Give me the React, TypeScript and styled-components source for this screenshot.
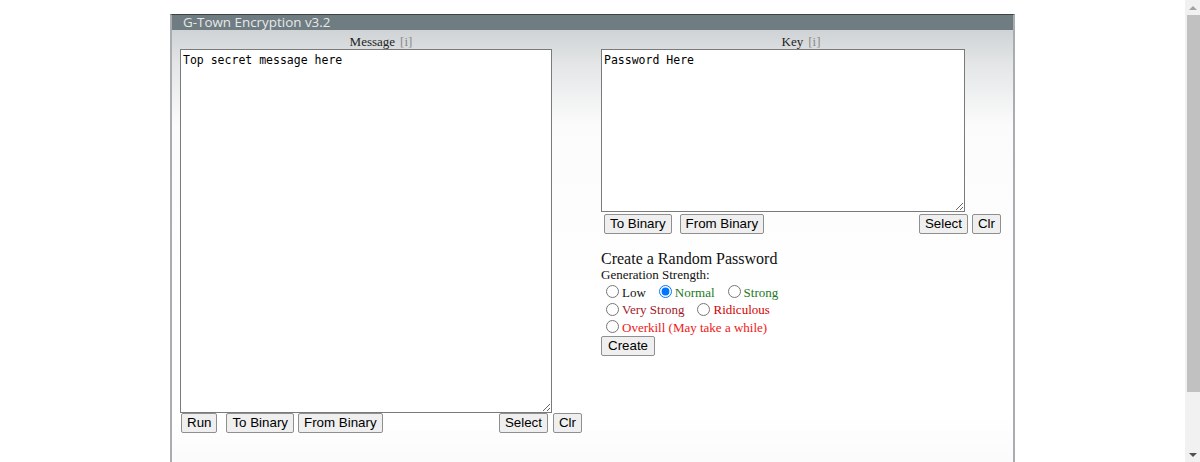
import { useState } from "react";
import styled, { createGlobalStyle } from "styled-components";

const GlobalStyle = createGlobalStyle`
  html, body {
    margin: 0;
    padding: 0;
    background: #fff;
    font-family: "Liberation Serif", "Times New Roman", serif;
  }
  body {
    padding: 14px 15px 0 0;
  }
`;

// fake classic scrollbar (page is taller than the window)
const ScrollTrack = styled.div`
  position: fixed;
  top: 0;
  right: 0;
  width: 15px;
  height: 100vh;
  background: #f1f1f1;
  display: flex;
  flex-direction: column;
  align-items: center;
`;

const ScrollArrow = styled.div<{ $down?: boolean }>`
  height: 15px;
  width: 15px;
  display: flex;
  align-items: center;
  justify-content: center;

  &::after {
    content: "";
    border-left: 4px solid transparent;
    border-right: 4px solid transparent;
    ${({ $down }) =>
      $down ? "border-top: 4px solid #505050;" : "border-bottom: 4px solid #a3a3a3;"}
  }
`;

const ScrollThumb = styled.div`
  width: 13px;
  margin-left: 1px;
  height: 377px;
  background: #c1c1c1;
`;

const ScrollGap = styled.div`
  flex: 1;
`;

const Frame = styled.div`
  width: 845px;
  margin: 0 auto;
  border-top: 1px solid #3c4347;
  border-left: 2px solid #a9adaf;
  border-right: 2px solid #a9adaf;
  background: linear-gradient(#c6cbcd 0px, #e4e6e7 50px, #fbfbfb 110px, #ffffff 300px, #ffffff 400px, #f4f4f4 520px);
  min-height: 514px;
  box-sizing: border-box;
`;

const TitleBar = styled.div`
  background: #6f7c81;
  color: #e6e9ea;
  font-family: "Open Sans", "DejaVu Sans", sans-serif;
  font-size: 13.4px;
  line-height: 15px;
  height: 15px;
  padding-left: 11px;
`;

const Columns = styled.div`
  display: grid;
  grid-template-columns: 402px 400px;
  column-gap: 19px;
  padding: 4px 0 0 8px;
`;

const Cell = styled.div`
  display: flex;
  flex-direction: column;
`;

const Label = styled.div`
  text-align: center;
  font-size: 13px;
  line-height: 15px;
  color: #222;
`;

const Info = styled.span`
  color: #8a8a8a;
  margin-left: 5px;
`;

const TextBox = styled.textarea<{ $w: number; $h: number }>`
  width: ${({ $w }) => $w}px;
  height: ${({ $h }) => $h}px;
  box-sizing: border-box;
  border: 1px solid #7a7a7a;
  background: #fff;
  font-family: "DejaVu Sans Mono", "Liberation Mono", monospace;
  font-size: 11.5px;
  line-height: 14px;
  padding: 3px 2px;
  margin: 0;
  color: #000;
  resize: both;
  outline: none;
`;

const ButtonRow = styled.div<{ $pad: number; $top?: number }>`
  display: flex;
  justify-content: space-between;
  align-items: center;
  padding-left: ${({ $pad }) => $pad}px;
  margin-top: ${({ $top }) => $top ?? 0}px;
`;

const Group = styled.div<{ $gap: number }>`
  display: flex;
  gap: ${({ $gap }) => $gap}px;
`;

const Btn = styled.button<{ $mr?: number }>`
  font-family: "Liberation Sans", Arial, sans-serif;
  font-size: 13.33px;
  height: 20px;
  line-height: 16px;
  padding: 0 5px;
  background: #efefef;
  border: 1px solid #8f8f8f;
  border-radius: 2px;
  color: #000;
  margin: 0;
  margin-right: ${({ $mr }) => $mr ?? 0}px;
  cursor: pointer;
`;

const Generator = styled.div`
  margin-top: 16px;
  display: flex;
  flex-direction: column;
  align-items: flex-start;
`;

const GenTitle = styled.div`
  font-size: 16px;
  line-height: 18px;
  color: #111;
`;

const GenSub = styled.div`
  font-size: 13px;
  line-height: 14px;
  color: #111;
  margin-bottom: 2px;
`;

const RadioLine = styled.div`
  display: flex;
  align-items: center;
  height: 17.5px;
  font-size: 13px;
`;

const Option = styled.label<{ $color: string }>`
  display: inline-flex;
  align-items: center;
  color: ${({ $color }) => $color};
  margin-right: 8px;
  cursor: pointer;

  input {
    width: 13px;
    height: 13px;
    margin: 0 3px 2px 5px;
    accent-color: #0075ff;
  }
`;

const CreateBtn = styled(Btn)`
  margin-top: -1px;
  padding: 0 6px;
`;

const strengths = [
  [
    { id: "low", text: "Low", color: "#111" },
    { id: "normal", text: "Normal", color: "#1b7a1b" },
    { id: "strong", text: "Strong", color: "#1b7a1b" },
  ],
  [
    { id: "vstrong", text: "Very Strong", color: "#a11a2a" },
    { id: "ridiculous", text: "Ridiculous", color: "#d40000" },
  ],
  [{ id: "overkill", text: "Overkill (May take a while)", color: "#f01818" }],
];

function App() {
  const [strength, setStrength] = useState("normal");
  const [message, setMessage] = useState("Top secret message here");
  const [key, setKey] = useState("Password Here");

  return (
    <>
      <GlobalStyle />
      <Frame>
        <TitleBar>G-Town Encryption v3.2</TitleBar>
        <Columns>
          <Cell>
            <Label>
              Message<Info>[i]</Info>
            </Label>
            <TextBox $w={372} $h={364} value={message} onChange={(e) => setMessage(e.target.value)} />
            <ButtonRow $pad={1}>
              <Group $gap={4}>
                <Btn $mr={5}>Run</Btn>
                <Btn>To Binary</Btn>
                <Btn>From Binary</Btn>
              </Group>
              <Group $gap={5}>
                <Btn>Select</Btn>
                <Btn>Clr</Btn>
              </Group>
            </ButtonRow>
          </Cell>
          <Cell>
            <Label>
              Key<Info>[i]</Info>
            </Label>
            <TextBox $w={364} $h={163} value={key} onChange={(e) => setKey(e.target.value)} />
            <ButtonRow $pad={3} $top={2}>
              <Group $gap={8}>
                <Btn>To Binary</Btn>
                <Btn>From Binary</Btn>
              </Group>
              <Group $gap={4}>
                <Btn>Select</Btn>
                <Btn>Clr</Btn>
              </Group>
            </ButtonRow>
            <Generator>
              <GenTitle>Create a Random Password</GenTitle>
              <GenSub>Generation Strength:</GenSub>
              {strengths.map((line, i) => (
                <RadioLine key={i}>
                  {line.map((o) => (
                    <Option key={o.id} $color={o.color}>
                      <input
                        type="radio"
                        name="strength"
                        checked={strength === o.id}
                        onChange={() => setStrength(o.id)}
                      />
                      {o.text}
                    </Option>
                  ))}
                </RadioLine>
              ))}
              <CreateBtn>Create</CreateBtn>
            </Generator>
          </Cell>
        </Columns>
      </Frame>
      <ScrollTrack>
        <ScrollArrow />
        <ScrollThumb />
        <ScrollGap />
        <ScrollArrow $down />
      </ScrollTrack>
    </>
  );
}

export default App;
